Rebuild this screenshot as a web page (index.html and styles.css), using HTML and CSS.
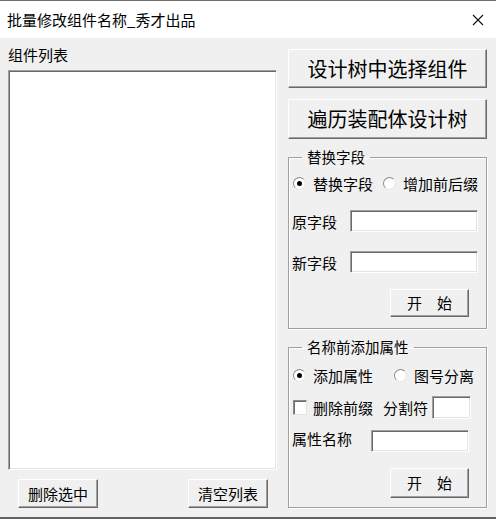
FILE: index.html
```html
<!DOCTYPE html>
<html lang="zh-CN">
<head>
  <meta charset="UTF-8">
  <meta name="viewport" content="width=device-width, initial-scale=1.0">
  <title>批量修改组件名称</title>
  <link rel="stylesheet" href="styles.css">
</head>
<body>

  <div class="window">
    <div class="titlebar">
      <span class="title">批量修改组件名称_秀才出品</span>
      <svg class="close" width="12" height="12" viewBox="0 0 12 12">
        <path d="M1 1 L11 11 M11 1 L1 11" stroke="#111" stroke-width="1.1" fill="none"/>
      </svg>
    </div>

    <div class="content">
      <div class="left">
        <div class="list-label">组件列表</div>
        <div class="listbox"></div>
        <div class="list-buttons">
          <button class="btn btn-small">删除选中</button>
          <button class="btn btn-small">清空列表</button>
        </div>
      </div>

      <div class="right">
        <button class="btn btn-big">设计树中选择组件</button>
        <button class="btn btn-big second">遍历装配体设计树</button>

        <fieldset class="group group-replace">
          <legend>替换字段</legend>
          <div class="radio-row">
            <span class="radio-item first-replace"><span class="radio checked"></span>替换字段</span>
            <span class="radio-item"><span class="radio"></span>增加前后缀</span>
          </div>
          <div class="field-row row-old">
            <span class="field-label">原字段</span>
            <span class="textbox tb-wide"></span>
          </div>
          <div class="field-row row-new">
            <span class="field-label">新字段</span>
            <span class="textbox tb-wide"></span>
          </div>
          <div class="action-row">
            <button class="btn btn-start">开　始</button>
          </div>
        </fieldset>

        <fieldset class="group group-attr">
          <legend>名称前添加属性</legend>
          <div class="radio-row">
            <span class="radio-item first-attr"><span class="radio checked"></span>添加属性</span>
            <span class="radio-item"><span class="radio"></span>图号分离</span>
          </div>
          <div class="check-row">
            <span class="checkbox"></span>
            <span class="check-text">删除前缀</span>
            <span class="split-label">分割符</span>
            <span class="textbox tb-split"></span>
          </div>
          <div class="field-row row-attr">
            <span class="field-label">属性名称</span>
            <span class="textbox tb-attr"></span>
          </div>
          <div class="action-row">
            <button class="btn btn-start tall">开　始</button>
          </div>
        </fieldset>
      </div>
    </div>
  </div>

</body>
</html>
```

FILE: styles.css
```css
body {
  margin: 0;
  padding: 0;
  font-family: "Noto Sans CJK SC", "Noto Sans", sans-serif;
  color: #000;
  background-color: #f0f0f0;
}

.window {
  width: 496px;
  height: 519px;
  box-sizing: border-box;
  display: flex;
  flex-direction: column;
  border-top: 1px solid #6e6e6e;
  border-bottom: 2px solid #646464;
}

.titlebar {
  height: 37px;
  flex: none;
  background-color: #fff;
  display: flex;
  align-items: center;
  justify-content: space-between;
  padding: 0 12px 0 7px;
}

.title {
  font-size: 15px;
  line-height: 20px;
}

.close {
  display: block;
}

.content {
  flex: 1;
  display: flex;
  padding: 0 0 0 8px;
  background-color: #f0f0f0;
}

/* left column */
.left {
  width: 269px;
  display: flex;
  flex-direction: column;
  padding-top: 6px;
}

.list-label {
  font-size: 15px;
  line-height: 22px;
}

.listbox {
  margin-top: 4px;
  height: 400px;
  box-sizing: border-box;
  background-color: #fff;
  border: 1px solid;
  border-color: #a0a0a0 #fff #fff #a0a0a0;
  box-shadow: inset 1px 1px 0 #696969, inset -1px -1px 0 #e3e3e3;
}

.list-buttons {
  margin-top: 9px;
  display: flex;
  justify-content: space-between;
  padding: 0 9px 0 10px;
}

/* buttons */
.btn {
  font-family: inherit;
  color: #000;
  background-color: #f0f0f0;
  border: 1px solid;
  border-color: #fff #696969 #696969 #fff;
  box-shadow: inset -1px -1px 0 #a0a0a0;
  padding: 0;
  margin: 0;
  box-sizing: border-box;
}

.btn-small {
  width: 80px;
  height: 29px;
  font-size: 15px;
  line-height: 20px;
}

.btn-big {
  width: 199px;
  height: 39px;
  font-size: 20px;
  line-height: 26px;
}

.btn-big.second {
  height: 40px;
  margin-top: 11px;
}

.btn-start {
  width: 79px;
  height: 28px;
  font-size: 15px;
  line-height: 20px;
}

.btn-start.tall {
  height: 30px;
}

/* right column */
.right {
  margin-left: 11px;
  width: 199px;
  display: flex;
  flex-direction: column;
  padding-top: 11px;
}

.group {
  margin: 9px 0 0 0;
  width: 199px;
  box-sizing: border-box;
  padding: 0 0 0 4px;
  border: 1px solid #a0a0a0;
  box-shadow: 1px 1px 0 #fff, inset 1px 1px 0 #fff;
  min-inline-size: 0;
}

.group legend {
  margin-left: 9px;
  padding: 0 5px;
  font-size: 14.5px;
  line-height: 18px;
}

.group-replace {
  padding-top: 6px;
  padding-bottom: 11px;
}

.group-attr {
  padding-top: 8px;
  padding-bottom: 9px;
}

.radio-row {
  height: 22px;
  display: flex;
  align-items: center;
  font-size: 15px;
}

.radio-item {
  display: flex;
  align-items: center;
  white-space: nowrap;
}

.first-replace {
  width: 90px;
}

.first-attr {
  width: 101px;
}

.radio {
  width: 13px;
  height: 13px;
  box-sizing: border-box;
  border-radius: 50%;
  background-color: #fff;
  border: 1px solid;
  border-color: #8a8a8a #e3e3e3 #e3e3e3 #8a8a8a;
  margin-right: 7px;
  display: flex;
  align-items: center;
  justify-content: center;
}

.radio.checked::after {
  content: "";
  width: 5px;
  height: 5px;
  border-radius: 50%;
  background-color: #000;
}

.field-row {
  display: flex;
  align-items: center;
  font-size: 15px;
  height: 22px;
}

.field-label {
  margin-left: -1px;
  white-space: nowrap;
}

.row-old {
  margin-top: 16px;
}

.row-new {
  margin-top: 19px;
}

.row-attr {
  margin-top: 11px;
  align-items: flex-start;
}

.row-attr .field-label {
  line-height: 18px;
}

.textbox {
  display: block;
  box-sizing: border-box;
  background-color: #fff;
  border: 1px solid;
  border-color: #a0a0a0 #fff #fff #a0a0a0;
  box-shadow: inset 1px 1px 0 #696969, inset -1px -1px 0 #e3e3e3;
}

.tb-wide {
  width: 128px;
  height: 22px;
  margin-left: 13px;
}

.tb-attr {
  width: 98px;
  height: 22px;
  margin-left: 19px;
}

.check-row {
  margin-top: 10px;
  height: 23px;
  display: flex;
  align-items: center;
  font-size: 15px;
  white-space: nowrap;
}

.checkbox {
  width: 14px;
  height: 15px;
  box-sizing: border-box;
  background-color: #fff;
  border: 1px solid;
  border-color: #8a8a8a #e3e3e3 #e3e3e3 #8a8a8a;
  box-shadow: inset 1px 1px 0 #6a6a6a;
  margin-right: 6px;
}

.split-label {
  margin-left: 10px;
}

.tb-split {
  width: 39px;
  height: 23px;
  margin-left: 4px;
}

.action-row {
  margin-top: 16px;
  display: flex;
  padding-left: 97px;
}
```
